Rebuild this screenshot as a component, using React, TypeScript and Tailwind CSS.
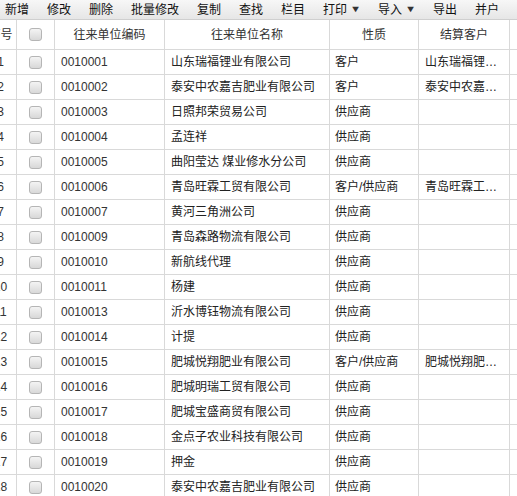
import React from 'react';

const tools: { label: string; drop?: boolean }[] = [
  { label: '新增' },
  { label: '修改' },
  { label: '删除' },
  { label: '批量修改' },
  { label: '复制' },
  { label: '查找' },
  { label: '栏目' },
  { label: '打印', drop: true },
  { label: '导入', drop: true },
  { label: '导出' },
  { label: '并户' },
  { label: '关闭' },
];

const rows: [string, string, string, string][] = [
  ['0010001', '山东瑞福锂业有限公司', '客户', '山东瑞福锂业有限公司'],
  ['0010002', '泰安中农嘉吉肥业有限公司', '客户', '泰安中农嘉吉肥业有限公司'],
  ['0010003', '日照邦荣贸易公司', '供应商', ''],
  ['0010004', '孟连祥', '供应商', ''],
  ['0010005', '曲阳莹达 煤业修水分公司', '供应商', ''],
  ['0010006', '青岛旺霖工贸有限公司', '客户/供应商', '青岛旺霖工贸有限公司'],
  ['0010007', '黄河三角洲公司', '供应商', ''],
  ['0010009', '青岛森路物流有限公司', '供应商', ''],
  ['0010010', '新航线代理', '供应商', ''],
  ['0010011', '杨建', '供应商', ''],
  ['0010013', '沂水博钰物流有限公司', '供应商', ''],
  ['0010014', '计提', '供应商', ''],
  ['0010015', '肥城悦翔肥业有限公司', '客户/供应商', '肥城悦翔肥业有限公司'],
  ['0010016', '肥城明瑞工贸有限公司', '供应商', ''],
  ['0010017', '肥城宝盛商贸有限公司', '供应商', ''],
  ['0010018', '金点子农业科技有限公司', '供应商', ''],
  ['0010019', '押金', '供应商', ''],
  ['0010020', '泰安中农嘉吉肥业有限公司', '供应商', ''],
];

const font = "font-['Liberation_Sans','Noto_Sans_CJK_SC',sans-serif]";
const grid = 'grid grid-cols-[32px_38px_110px_165px_89px_91px_80px]';
const cell = 'border-r border-b border-[#d9d9d9] overflow-hidden whitespace-nowrap';

function Check() {
  return (
    <span className="block w-[13px] h-[13px] rounded-[3px] border border-[#b5b5b5] bg-gradient-to-b from-[#f4f4f4] to-[#d8d8d8]" />
  );
}

export default function App() {
  return (
    <div className={`w-[517px] h-[496px] overflow-hidden bg-white text-[12px] text-[#222] ${font}`}>
      {/* 工具栏 */}
      <div className="h-[20px] flex items-center gap-[18px] pl-[5px] border-b border-[#cfcfcf] bg-gradient-to-b from-[#f7f7f7] to-[#e6e6e6] whitespace-nowrap text-[#111]">
        {tools.map((t) => (
          <span key={t.label} className="flex items-center leading-none">
            {t.label}
            {t.drop && <span className="ml-[4px] text-[9px] text-[#333] scale-x-125">▼</span>}
          </span>
        ))}
      </div>

      <div className="-ml-[15px] w-[605px]">
        {/* 表头 */}
        <div className={`${grid} h-[30px] text-[#333]`}>
          <div className={`${cell} flex items-center justify-center`}>序号</div>
          <div className={`${cell} flex items-center justify-center`}>
            <Check />
          </div>
          <div className={`${cell} flex items-center justify-center`}>往来单位编码</div>
          <div className={`${cell} flex items-center justify-center`}>往来单位名称</div>
          <div className={`${cell} flex items-center justify-center`}>性质</div>
          <div className={`${cell} flex items-center justify-center`}>结算客户</div>
          <div className={cell}></div>
        </div>

        {/* 数据行 */}
        {rows.map((r, i) => (
          <div key={r[0]} className={`${grid} h-[25px]`}>
            <div className={`${cell} flex items-center justify-center text-[#333]`}>{i + 1}</div>
            <div className={`${cell} flex items-center justify-center`}>
              <Check />
            </div>
            <div className={`${cell} flex items-center px-[6px] text-[#333]`}>{r[0]}</div>
            <div className={`${cell} flex items-center px-[6px]`}>{r[1]}</div>
            <div className={`${cell} flex items-center px-[5px]`}>{r[2]}</div>
            <div className={`${cell} flex items-center px-[6px]`}>
              <span className="block overflow-hidden text-ellipsis">{r[3]}</span>
            </div>
            <div className={cell}></div>
          </div>
        ))}
      </div>
    </div>
  );
}
